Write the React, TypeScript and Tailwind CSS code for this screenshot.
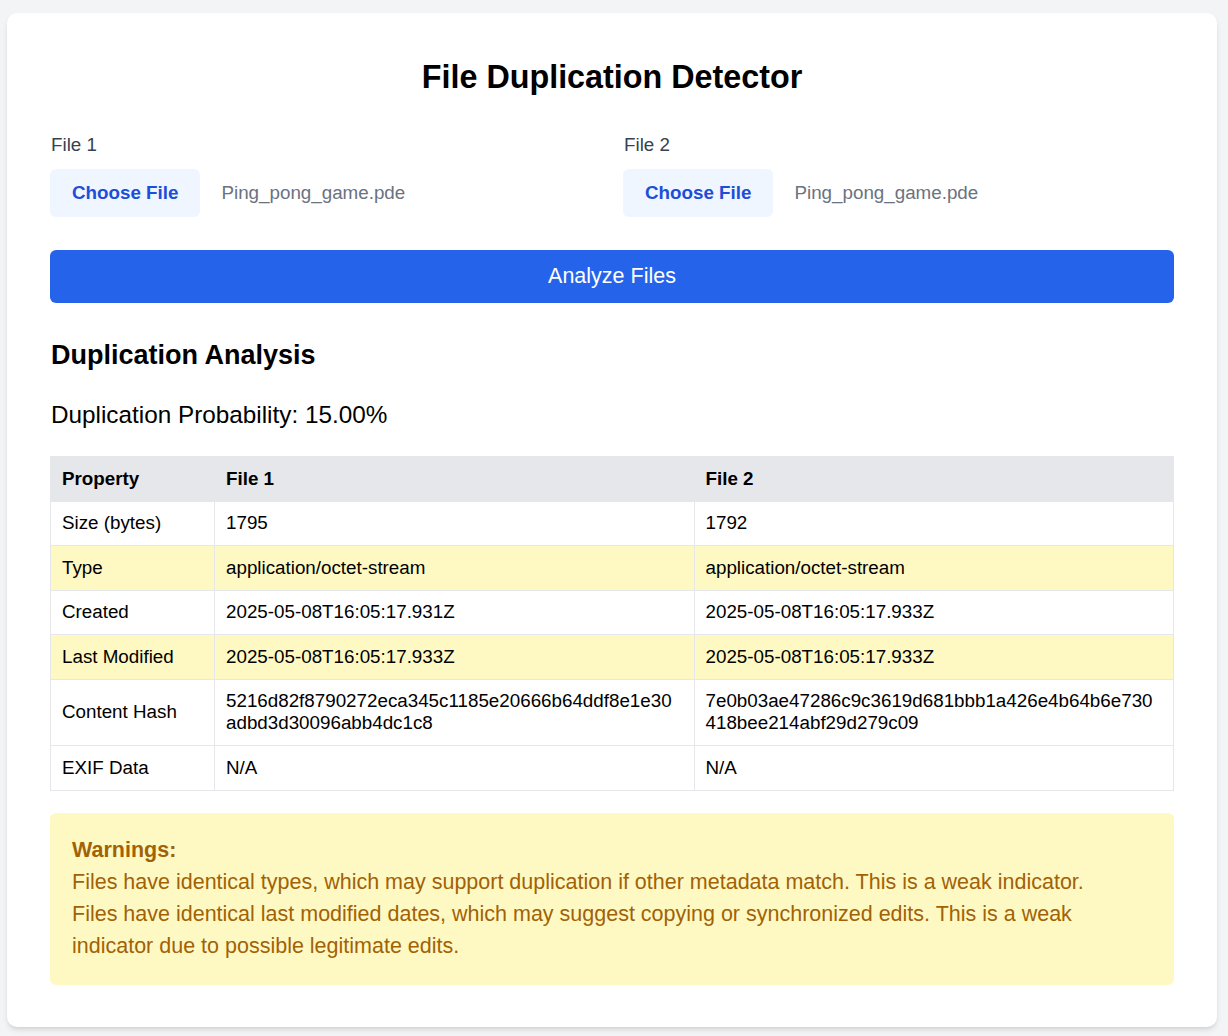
import React from 'react';

type Row = {
    label: string;
    file1: string;
    file2: string;
    highlight?: boolean;
};

const rows: Row[] = [
    { label: 'Size (bytes)', file1: '1795', file2: '1792' },
    { label: 'Type', file1: 'application/octet-stream', file2: 'application/octet-stream', highlight: true },
    { label: 'Created', file1: '2025-05-08T16:05:17.931Z', file2: '2025-05-08T16:05:17.933Z' },
    { label: 'Last Modified', file1: '2025-05-08T16:05:17.933Z', file2: '2025-05-08T16:05:17.933Z', highlight: true },
    {
        label: 'Content Hash',
        file1: '5216d82f8790272eca345c1185e20666b64ddf8e1e30adbd3d30096abb4dc1c8',
        file2: '7e0b03ae47286c9c3619d681bbb1a426e4b64b6e730418bee214abf29d279c09',
    },
    { label: 'EXIF Data', file1: 'N/A', file2: 'N/A' },
];

const warnings = [
    'Files have identical types, which may support duplication if other metadata match. This is a weak indicator.',
    'Files have identical last modified dates, which may suggest copying or synchronized edits. This is a weak indicator due to possible legitimate edits.',
];

function FilePicker({ label, fileName }: { label: string; fileName: string }) {
    return (
        <div>
            <p className="text-[18.8px] leading-[28px] text-[#374151] mb-[10px] pl-[1px]">{label}</p>
            <div className="flex items-center">
                <span className="h-[48px] px-[22px] flex items-center rounded-[6px] bg-[#eff6ff] text-[#1d4ed8] font-bold text-[18.8px]">
                    Choose File
                </span>
                <span className="ml-[21px] text-[18.8px] text-[#6b7280]">{fileName}</span>
            </div>
        </div>
    );
}

export default function App() {
    return (
        <div
            className="min-h-screen bg-[#f3f4f6] pt-[13px] pl-[7px] pr-[11px] pb-[8px]"
            style={{ fontFamily: '"Liberation Sans", Arial, sans-serif' }}
        >
            <div className="bg-white rounded-[10px] shadow-md px-[43px] pt-[46px] pb-[42px]">
                <h1 className="text-center font-bold text-[32.3px] leading-[36px] text-black">
                    File Duplication Detector
                </h1>

                {/* File inputs */}
                <div className="grid grid-cols-2 gap-[22px] mt-[36px]">
                    <FilePicker label="File 1" fileName="Ping_pong_game.pde" />
                    <FilePicker label="File 2" fileName="Ping_pong_game.pde" />
                </div>

                <button className="mt-[33px] w-full h-[53px] rounded-[6px] bg-[#2563eb] text-white text-[21.5px]">
                    Analyze Files
                </button>

                {/* Results */}
                <h2 className="mt-[36px] pl-[1px] font-bold text-[27px] leading-[32px] text-black">Duplication Analysis</h2>
                <p className="mt-[28px] pl-[1px] text-[24.3px] leading-[32px] text-black">Duplication Probability: 15.00%</p>

                <table className="mt-[25px] w-full table-fixed border-collapse text-[18.8px] leading-[22px] text-black">
                    <thead>
                        <tr className="bg-[#e5e7eb]">
                            <th className="w-[164px] text-left font-bold pl-[11px] pr-[13px] py-[10.75px] border border-[#e5e7eb]">Property</th>
                            <th className="text-left font-bold pl-[11px] pr-[13px] py-[10.75px] border border-[#e5e7eb]">File 1</th>
                            <th className="text-left font-bold pl-[11px] pr-[13px] py-[10.75px] border border-[#e5e7eb]">File 2</th>
                        </tr>
                    </thead>
                    <tbody>
                        {rows.map((row) => (
                            <tr key={row.label} className={row.highlight ? 'bg-[#fef9c3]' : 'bg-white'}>
                                <td className="pl-[11px] pr-[13px] py-[10.75px] border border-[#e5e7eb]">{row.label}</td>
                                <td className="pl-[11px] pr-[13px] py-[10.75px] border border-[#e5e7eb] break-all">{row.file1}</td>
                                <td className="pl-[11px] pr-[13px] py-[10.75px] border border-[#e5e7eb] break-all">{row.file2}</td>
                            </tr>
                        ))}
                    </tbody>
                </table>

                {/* Warnings */}
                <div className="mt-[22px] rounded-[6px] bg-[#fef9c3] px-[22px] pt-[21px] pb-[23px] text-[#a16207] text-[21.5px] leading-[32px]">
                    <p className="font-bold">Warnings:</p>
                    {warnings.map((w) => (
                        <p key={w}>{w}</p>
                    ))}
                </div>
            </div>
        </div>
    );
}
